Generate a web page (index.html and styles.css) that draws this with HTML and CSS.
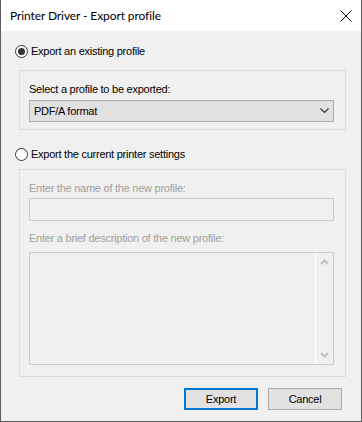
FILE: index.html
```html
<!DOCTYPE html>
<html>
<head>
<meta charset="utf-8">
<link rel="stylesheet" href="styles.css">
</head>
<body>
<div class="window">
  <div class="titlebar">
    <span class="title">Printer Driver - Export profile</span>
    <svg class="close" width="12" height="12" viewBox="0 0 12 12"><path d="M0.5 0.5 L11.5 11.5 M11.5 0.5 L0.5 11.5" stroke="#000" stroke-width="1" fill="none"/></svg>
  </div>
  <div class="content">
    <label class="radio-row first">
      <span class="radio checked"></span>
      <span class="radio-text">Export an existing profile</span>
    </label>
    <div class="group group-one">
      <div class="label">Select a profile to be exported:</div>
      <div class="combo">
        <span class="combo-text">PDF/A format</span>
        <svg class="chev" width="9" height="6" viewBox="0 0 9 6"><path d="M0.5 0.5 L4.5 4.5 L8.5 0.5" stroke="#333" stroke-width="1.2" fill="none"/></svg>
      </div>
    </div>
    <label class="radio-row second">
      <span class="radio"></span>
      <span class="radio-text">Export the current printer settings</span>
    </label>
    <div class="group group-two">
      <div class="label disabled">Enter the name of the new profile:</div>
      <div class="input"></div>
      <div class="label disabled second-label">Enter a brief description of the new profile:</div>
      <div class="textarea">
        <div class="ta-body"></div>
        <div class="scrollbar">
          <svg width="9" height="6" viewBox="0 0 9 6"><path d="M1 5 L4.5 1.5 L8 5" stroke="#bfbfbf" stroke-width="2" fill="none"/></svg>
          <svg width="9" height="6" viewBox="0 0 9 6"><path d="M1 1 L4.5 4.5 L8 1" stroke="#bfbfbf" stroke-width="2" fill="none"/></svg>
        </div>
      </div>
    </div>
    <div class="buttons">
      <div class="btn default">Export</div>
      <div class="btn">Cancel</div>
    </div>
  </div>
</div>
</body>
</html>
```
FILE: styles.css
```css
html, body {
  margin: 0;
  padding: 0;
  background: #ffffff;
}
.window {
  width: 362px;
  height: 422px;
  box-sizing: border-box;
  border: 1px solid #5e5e5e;
  border-top: none;
  background: #f0f0f0;
  display: flex;
  flex-direction: column;
  font-family: "Liberation Sans", Arial, sans-serif;
  font-size: 11px;
  letter-spacing: -0.25px;
  color: #000;
}
.titlebar {
  height: 31px;
  background: #ffffff;
  display: flex;
  align-items: center;
  justify-content: space-between;
  padding: 0 8px 0 9px;
  flex-shrink: 0;
}
.title {
  font-family: Lato, "Open Sans", sans-serif;
  font-size: 12px;
  letter-spacing: -0.1px;
  color: #000;
  margin-top: -1px;
}
.close {
  margin-right: 1px;
  margin-top: 1px;
}
.content {
  display: flex;
  flex-direction: column;
  padding: 0 15px 0 14px;
}
.radio-row {
  display: flex;
  align-items: center;
  height: 13px;
  gap: 3px;
}
.radio-row.first {
  margin-top: 14px;
}
.radio-row.second {
  margin-top: 18px;
}
.radio {
  width: 13px;
  height: 13px;
  box-sizing: border-box;
  border: 1px solid #333333;
  border-radius: 50%;
  background: #ffffff;
  display: flex;
  align-items: center;
  justify-content: center;
}
.radio.checked::after {
  content: "";
  width: 7px;
  height: 7px;
  border-radius: 50%;
  background: #333333;
}
.radio-text {
  line-height: 13px;
}
.group {
  margin-left: 4px;
  border: 1px solid #dcdcdc;
  display: flex;
  flex-direction: column;
  padding: 0 11px 0 9px;
}
.group-one {
  margin-top: 12px;
  height: 60px;
  box-sizing: border-box;
}
.group-two {
  margin-top: 8px;
  height: 208px;
  box-sizing: border-box;
}
.label {
  margin-top: 12px;
  line-height: 13px;
  height: 13px;
}
.label.disabled {
  color: #a0a0a0;
}
.label.second-label {
  margin-top: 11px;
}
.combo {
  margin-top: 4px;
  height: 22px;
  box-sizing: border-box;
  border: 1px solid #adadad;
  background: #e1e1e1;
  display: flex;
  align-items: center;
  justify-content: space-between;
  padding: 0 4px 0 4px;
}
.input {
  margin-top: 3px;
  height: 23px;
  box-sizing: border-box;
  border: 1px solid #cccccc;
  background: #f0f0f0;
}
.textarea {
  margin-top: 7px;
  height: 113px;
  box-sizing: border-box;
  border: 1px solid #cccccc;
  background: #f0f0f0;
  display: flex;
}
.ta-body {
  flex: 1;
}
.scrollbar {
  width: 17px;
  border-left: 1px solid #ffffff;
  display: flex;
  flex-direction: column;
  justify-content: space-between;
  align-items: center;
  padding: 6px 0 6px 0;
}
.buttons {
  display: flex;
  justify-content: flex-end;
  gap: 10px;
  margin-top: 11px;
  padding-right: 4px;
}
.btn {
  width: 74px;
  height: 22px;
  box-sizing: border-box;
  border: 1px solid #adadad;
  background: #e1e1e1;
  display: flex;
  align-items: center;
  justify-content: center;
}
.btn.default {
  border: 2px solid #0078d7;
}
```
